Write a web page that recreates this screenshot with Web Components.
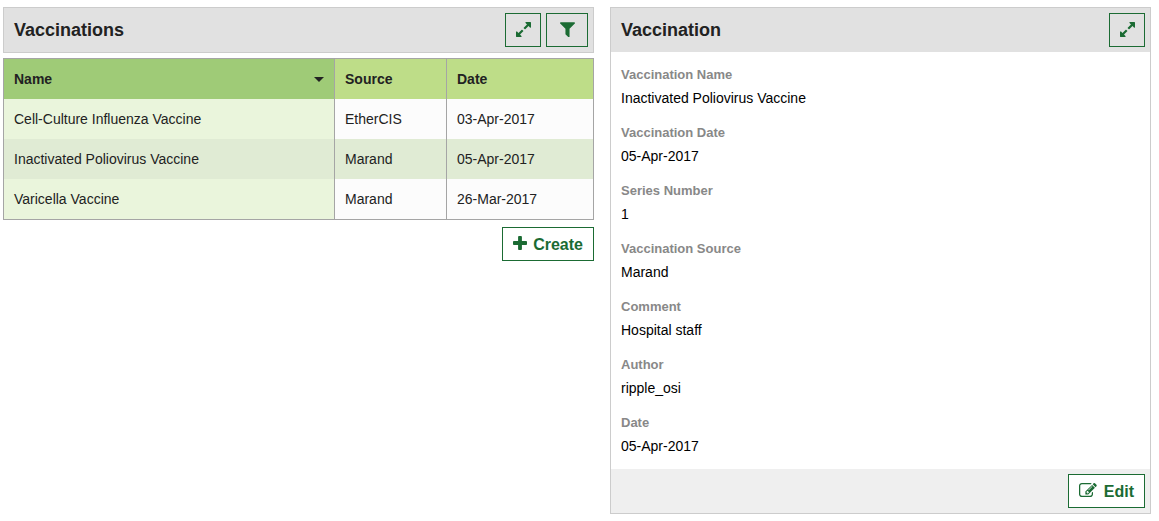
<!DOCTYPE html>
<html lang="en">
<head>
<meta charset="utf-8">
<title>Vaccinations</title>
<style>
  body {
    margin: 0;
    background: #fff;
    color: #222;
    font: 14px/20px "Liberation Sans", Arial, sans-serif;
    --green: #1b6b33;
    --line: #ccc;
    --bar: #e1e1e1;
  }
</style>
</head>
<body>
<vaccination-page></vaccination-page>

<script>
const base = `*, *::before { box-sizing: border-box; }`;

const define = (name, html, setup) => {
  const template = document.createElement('template');
  template.innerHTML = html;
  customElements.define(name, class extends HTMLElement {
    constructor() {
      super();
      this.attachShadow({ mode: 'open' }).append(template.content.cloneNode(true));
    }
    connectedCallback() {
      if (setup) setup(this, this.shadowRoot);
    }
  });
};

/* Glyphs are in font units with the y axis pointing up; top is the height above the baseline. */
const icons = {
  expand: { w: 1536, h: 1536, top: 1408, width: 15, height: 15,
    d: 'M755 480q0 -13 -10 -23l-332 -332l144 -144q19 -19 19 -45t-19 -45t-45 -19h-448q-26 0 -45 19t-19 45v448q0 26 19 45t45 19t45 -19l144 -144l332 332q10 10 23 10t23 -10l114 -114q10 -10 10 -23zM1536 1344v-448q0 -26 -19 -45t-45 -19t-45 19l-144 144l-332 -332q-10 -10 -23 -10t-23 10l-114 114q-10 10 -10 23t10 23l332 332l-144 144q-19 19 -19 45t19 45t45 19h448q26 0 45 -19t19 -45z' },
  filter: { w: 1408, h: 1408, top: 1312, width: 15, height: 15,
    d: 'M1403 1241q17 -41 -14 -70l-493 -493v-742q0 -42 -39 -59q-13 -5 -25 -5q-27 0 -45 19l-256 256q-19 19 -19 45v486l-493 493q-31 29 -14 70q17 39 59 39h1280q42 0 59 -39z' },
  plus: { w: 1408, h: 1408, top: 1408, width: 14, height: 14,
    d: 'M1408 800v-192q0 -40 -28 -68t-68 -28h-416v-416q0 -40 -28 -68t-68 -28h-192q-40 0 -68 28t-28 68v416h-416q-40 0 -68 28t-28 68v192q0 40 28 68t68 28h416v416q0 40 28 68t68 28h192q40 0 68 -28t28 -68v-416h416q40 0 68 -28t28 -68z' },
  edit: { w: 1792, h: 1408, top: 1408, width: 19, height: 14,
    d: 'M888 352l116 116l-152 152l-116 -116v-56h96v-96h56zM1328 1072q-16 16 -33 -1l-350 -350q-17 -17 -1 -33t33 1l350 350q17 17 1 33zM1408 478v-190q0 -119 -84.5 -203.5t-203.5 -84.5h-832q-119 0 -203.5 84.5t-84.5 203.5v832q0 119 84.5 203.5t203.5 84.5h832q63 0 117 -25q15 -7 18 -23q3 -17 -9 -29l-49 -49q-14 -14 -32 -8q-23 6 -45 6h-832q-66 0 -113 -47t-47 -113v-832q0 -66 47 -113t113 -47h832q66 0 113 47t47 113v126q0 13 9 22l64 64q15 15 35 7t20 -29zM1312 1216l288 -288l-672 -672h-288v288zM1756 1084l-92 -92l-288 288l92 92q28 28 68 28t68 -28l152 -152q28 -28 28 -68t-28 -68z' }
};

define('ui-icon', `
  <style>
    :host { display: block; flex: none; }
    svg { display: block; fill: currentColor; }
  </style>
  <div></div>`, (host, root) => {
  const i = icons[host.getAttribute('name')];
  root.querySelector('div').innerHTML = `<svg width="${i.width}" height="${i.height}" viewBox="0 0 ${i.w} ${i.h}" preserveAspectRatio="xMinYMid" aria-hidden="true">
    <path transform="translate(0 ${i.top}) scale(1 -1)" d="${i.d}"/></svg>`;
});

define('ui-button', `
  <style>
    ${base}
    :host { display: block; }
    button {
      display: flex; align-items: center; gap: 6px;
      height: 34px; margin: 0; padding: 2px 10px 0;
      border: 1px solid var(--green); border-radius: 0;
      background: #fff; color: var(--green);
      font: bold 16px/20px "Liberation Sans", Arial, sans-serif;
      cursor: pointer;
    }
    :host([square]) button { align-items: start; padding: 8px 9px 0 10px; background: transparent; }
    :host([square="wide"]) button { padding: 8px 12px 0 13px; }
    ui-icon { padding-bottom: 4px; }
  </style>
  <button type="button"><slot></slot></button>`, (host, root) => {
  const button = root.querySelector('button');
  const icon = document.createElement('ui-icon');
  icon.setAttribute('name', host.getAttribute('icon'));
  button.prepend(icon);
  if (host.title) button.setAttribute('aria-label', host.title);
});

define('panel-header', `
  <style>
    ${base}
    :host { display: flex; align-items: center; justify-content: space-between;
            padding: 5px 5px 5px 10px; background: var(--bar); }
    h2 { margin: 0; font-size: 18px; line-height: 24px; }
    .actions { display: flex; gap: 5px; }
  </style>
  <h2><slot></slot></h2>
  <div class="actions"><slot name="actions"></slot></div>`);

define('vaccination-table', `
  <style>
    ${base}
    :host { display: block; border: 1px solid #a5a5a5; }
    table { width: 100%; border-collapse: separate; border-spacing: 0; table-layout: fixed; }
    .source { width: 112px; }
    .date { width: 146px; }
    th, td { height: 40px; padding: 0 10px; text-align: left; border-right: 1px solid #a5a5a5; }
    th:last-child, td:last-child { border-right: 0; }
    th { background: #bedd88; }
    th:first-child { background: #9fcb77; }
    td { background: #fcfcfc; }
    td:first-child { background: #eaf5dc; }
    tr.selected td { background: #e0ebd4; }
    button { display: flex; width: 100%; align-items: center; justify-content: space-between;
             padding: 0; border: 0; background: none; color: inherit; font: inherit; cursor: pointer; }
    .caret { border: 5px solid transparent; border-top-color: currentColor; border-bottom: 0; }
  </style>
  <table>
    <colgroup><col><col class="source"><col class="date"></colgroup>
    <thead>
      <tr>
        <th scope="col" aria-sort="descending"><button type="button">Name<span class="caret"></span></button></th>
        <th scope="col"><button type="button">Source</button></th>
        <th scope="col"><button type="button">Date</button></th>
      </tr>
    </thead>
    <tbody>
      <tr><td>Cell-Culture Influenza Vaccine</td><td>EtherCIS</td><td>03-Apr-2017</td></tr>
      <tr class="selected"><td>Inactivated Poliovirus Vaccine</td><td>Marand</td><td>05-Apr-2017</td></tr>
      <tr><td>Varicella Vaccine</td><td>Marand</td><td>26-Mar-2017</td></tr>
    </tbody>
  </table>`);

define('detail-field', `
  <style>
    :host { display: block; margin-bottom: 12px; }
    .label { color: #888; font-size: 13px; line-height: 24px; font-weight: bold; }
    .value { color: #000; line-height: 22px; }
  </style>
  <div class="label"><slot name="label"></slot></div>
  <div class="value"><slot></slot></div>`);

define('vaccination-list', `
  <style>
    ${base}
    :host { display: flex; flex-direction: column; }
    panel-header { border: 1px solid var(--line); margin-bottom: 5px; }
    .footer { display: flex; justify-content: flex-end; padding-top: 7px; }
  </style>
  <panel-header>Vaccinations
    <ui-button slot="actions" icon="expand" square title="Expand"></ui-button>
    <ui-button slot="actions" icon="filter" square="wide" title="Filter"></ui-button>
  </panel-header>
  <vaccination-table></vaccination-table>
  <div class="footer"><ui-button icon="plus">Create</ui-button></div>`);

define('vaccination-detail', `
  <style>
    ${base}
    :host { display: block; border: 1px solid var(--line); }
    .body { display: flow-root; padding: 11px 10px 0; }
    .footer { display: flex; justify-content: flex-end; padding: 5px; background: #efefef; }
  </style>
  <panel-header>Vaccination
    <ui-button slot="actions" icon="expand" square title="Expand"></ui-button>
  </panel-header>
  <div class="body">
    <detail-field><span slot="label">Vaccination Name</span>Inactivated Poliovirus Vaccine</detail-field>
    <detail-field><span slot="label">Vaccination Date</span>05-Apr-2017</detail-field>
    <detail-field><span slot="label">Series Number</span>1</detail-field>
    <detail-field><span slot="label">Vaccination Source</span>Marand</detail-field>
    <detail-field><span slot="label">Comment</span>Hospital staff</detail-field>
    <detail-field><span slot="label">Author</span>ripple_osi</detail-field>
    <detail-field><span slot="label">Date</span>05-Apr-2017</detail-field>
  </div>
  <div class="footer"><ui-button icon="edit">Edit</ui-button></div>`);

define('vaccination-page', `
  <style>
    ${base}
    :host { display: grid; grid-template-columns: 591fr 541fr; align-items: start; gap: 16px;
            padding: 7px 8px 7px 3px; }
  </style>
  <vaccination-list></vaccination-list>
  <vaccination-detail></vaccination-detail>`);
</script>
</body>
</html>
